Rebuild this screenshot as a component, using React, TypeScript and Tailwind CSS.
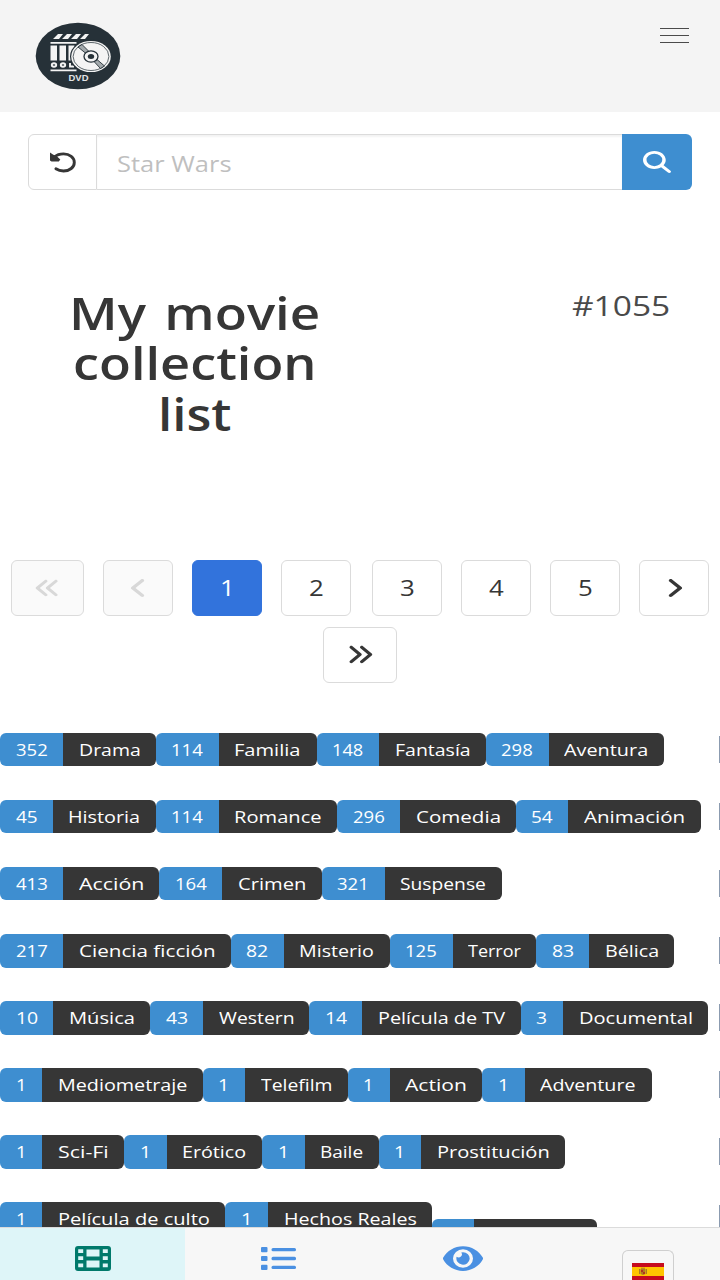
import React, { useLayoutEffect, useRef, useState } from "react";
import { FaEye } from "react-icons/fa";
import {
  FaAngleLeft,
  FaAngleRight,
  FaAnglesLeft,
  FaAnglesRight,
  FaMagnifyingGlass,
} from "react-icons/fa6";

// A line of text whose glyphs are widened to fill the given width.
function Fit({ w, children, className = "" }: { w: number; children: string; className?: string }) {
  const ref = useRef<HTMLSpanElement>(null);
  const [scale, setScale] = useState(1.24);
  useLayoutEffect(() => {
    if (ref.current) setScale(w / ref.current.offsetWidth);
  }, [w, children]);
  return (
    <span className={`flex ${className}`} style={{ width: w }}>
      <span ref={ref} className="block shrink-0 origin-left whitespace-nowrap" style={{ transform: `scaleX(${scale})` }}>
        {children}
      </span>
    </span>
  );
}

type Genre = [count: string, countWidth: number, name: string, nameWidth: number];

const rows: Genre[][] = [
  [["352", 63, "Drama", 92.5], ["114", 63, "Familia", 98], ["148", 62.5, "Fantasía", 106.5], ["298", 63, "Aventura", 115]],
  [["45", 52.5, "Historia", 103], ["114", 63, "Romance", 118.5], ["296", 63, "Comedia", 115.5], ["54", 52.5, "Animación", 132.5]],
  [["413", 63, "Acción", 96], ["164", 63, "Crimen", 99.5], ["321", 63, "Suspense", 117]],
  [["217", 63, "Ciencia ficción", 167.5], ["82", 53, "Misterio", 106], ["125", 63, "Terror", 83.5], ["83", 53, "Bélica", 85]],
  [["10", 53, "Música", 97], ["43", 53, "Western", 106], ["14", 53, "Película de TV", 158.5], ["3", 42.5, "Documental", 144.5]],
  [["1", 42, "Mediometraje", 160.5], ["1", 42.5, "Telefilm", 102.5], ["1", 42, "Action", 92.5], ["1", 42.5, "Adventure", 127]],
  [["1", 42, "Sci-Fi", 82], ["1", 42.5, "Erótico", 95.5], ["1", 42.5, "Baile", 74], ["1", 42.5, "Prostitución", 143.5]],
  [["1", 42, "Película de culto", 183], ["1", 43, "Hechos Reales", 163.5], ["1", 42, "Navidad", 123.5]],
];

function Tag({ genre, lowered }: { genre: Genre; lowered: boolean }) {
  const [count, cw, name, nw] = genre;
  return (
    <div className={`flex h-[33.6px] shrink-0 overflow-hidden rounded-[6px] text-[16.8px] leading-[33px] text-white ${lowered ? "mt-[17px]" : ""}`}>
      <div className="flex justify-center bg-[#3e8ed0]" style={{ width: cw }}>
        <Fit w={cw - 31}>{count}</Fit>
      </div>
      <div className="flex justify-center bg-[#363636]" style={{ width: nw }}>
        <Fit w={nw - 31}>{name}</Fit>
      </div>
    </div>
  );
}

const pageBox = "flex h-14 shrink-0 items-center justify-center rounded-[6px] border-[1.5px] text-[22.4px]";

function Logo() {
  return (
    <svg width="86" height="68" viewBox="0 0 86 68" className="block">
      <ellipse cx="43" cy="34" rx="42.3" ry="33.2" fill="#263138" />
      <g fill="#f4f4f4">
        <path d="M18 17l5-5h5l-4 5zM27 17l5-5h5l-4 5zM36 17l5-5h5l-4 5zM45 17l5-5h4l-4 5z" />
        <path d="M15.500 20h26v1.800h-26zM15.500 23.500h6.500v15h-6.500zM24.500 23.500h6.500v15h-6.500zM33.500 23.500h6v15h-6zM15.500 47.500h26v1.800h-26z" />
      </g>
      <g fill="none" stroke="#f4f4f4" strokeWidth="1.900">
        <ellipse cx="19" cy="43" rx="2.200" ry="1.700" />
        <ellipse cx="28" cy="43" rx="2.200" ry="1.700" />
        <path d="M35 41v3.500h4" />
      </g>
      <ellipse cx="56" cy="34.500" rx="21" ry="16.700" fill="#263138" />
      <ellipse cx="56" cy="34.500" rx="19.800" ry="15.600" fill="#f4f4f4" />
      <ellipse cx="56" cy="34.500" rx="17.900" ry="14" fill="none" stroke="#4c565b" strokeWidth="0.900" />
      <path d="M43 25l4-2.500 7 7-3 2zM59 39.500l3-2 7.500 6.500-4 2.500z" fill="#a3a9ac" stroke="#263138" strokeWidth="0.900" />
      <ellipse cx="56" cy="34.500" rx="7" ry="5.600" fill="#f4f4f4" stroke="#263138" strokeWidth="1.300" />
      <ellipse cx="56" cy="34.500" rx="3.200" ry="2.500" fill="#263138" />
      <text x="33.500" y="59" fontSize="9" fontWeight="700" fontFamily="Liberation Sans, sans-serif" fill="#e2e4e5" textLength="20" lengthAdjust="spacingAndGlyphs">
        DVD
      </text>
    </svg>
  );
}

export default function App() {
  return (
    <div className="flex h-[1280px] w-[720px] flex-col overflow-hidden bg-white font-['Open_Sans','Noto_Sans',sans-serif] text-[#363636]">
      <header className="flex h-28 shrink-0 items-start justify-between bg-[#f4f4f4] pl-[35px] pr-[31.500px]">
        <div className="pt-[21.500px]">
          <Logo />
        </div>
        <button aria-label="Menu" className="flex w-[28.500px] flex-col gap-[5.600px] pt-[28px]">
          <span className="h-[1.400px] w-full bg-[#4a4a4a]" />
          <span className="h-[1.400px] w-full bg-[#4a4a4a]" />
          <span className="h-[1.400px] w-full bg-[#4a4a4a]" />
        </button>
      </header>

      <main className="flex min-h-0 flex-1 flex-col overflow-hidden">
        <div className="mt-[22px] flex h-14 w-[664px] shrink-0 self-center">
          <button aria-label="Reset" className="flex w-[69px] items-center justify-center rounded-l-[6px] border-[1.500px] border-[#dbdbdb]">
            <svg width="26" height="21" viewBox="0 0 26 21">
              <path d="M0 .5l3.300 2.200 3 1 4 3.800-1.500 2H1.500L0 8.500z" fill="currentColor" />
              <path d="M4.500 5C7 2.700 10 1.900 13.500 1.900c6.200 0 10.800 3.700 10.800 8.500s-4.600 8.600-10.800 8.600c-3 0-5.500-.8-7.600-2.200" fill="none" stroke="currentColor" strokeWidth="2.900" strokeLinecap="round" />
            </svg>
          </button>
          <div className="flex flex-1 items-center border-y-[1.500px] border-[#dbdbdb] pl-[20px] pt-[3px] text-[22.400px] text-[#bfbfbf] shadow-[inset_0_2px_2px_rgba(10,10,10,0.05)]">
            <Fit w={115}>Star Wars</Fit>
          </div>
          <button aria-label="Search" className="flex w-[70px] items-center justify-center rounded-r-[6px] bg-[#3e8ed0] text-white">
            <FaMagnifyingGlass className="h-[22px] w-[28px]" preserveAspectRatio="none" />
          </button>
        </div>

        <div className="mt-[98px] flex h-[271.500px] shrink-0 items-start justify-between pl-[69px] pr-[50px]">
          <h1 className="flex w-[251px] flex-col items-center text-[44.800px] font-semibold leading-[50.400px] [word-spacing:4px]">
            <Fit w={251}>My movie</Fit>
            <Fit w={244}>collection</Fit>
            <Fit w={74}>list</Fit>
          </h1>
          <Fit w={98} className="mt-[-1px] text-[28px] leading-[36px] text-[#4a4a4a]">#1055</Fit>
        </div>

        <nav className="flex shrink-0 flex-col items-center gap-[11px]">
          <div className="flex gap-[19px]">
            <div className={`${pageBox} w-[73px] border-[#dbdbdb] bg-[#fafafa] text-[#d8d8d8]`}>
              <FaAnglesLeft className="h-[22px] w-[27px]" preserveAspectRatio="none" />
            </div>
            <div className={`${pageBox} w-[70px] border-[#dbdbdb] bg-[#fafafa] text-[#d8d8d8]`}>
              <FaAngleLeft className="h-[24px] w-[19px]" preserveAspectRatio="none" />
            </div>
            <div className={`${pageBox} w-[70px] border-[#3273dc] bg-[#3273dc] text-white`}>
              <Fit w={15}>1</Fit>
            </div>
            {["2", "3", "4", "5"].map((n) => (
              <div key={n} className={`${pageBox} w-[70px] border-[#dbdbdb] ${n === "2" ? "mr-[2px]" : ""}`}>
                <Fit w={15}>{n}</Fit>
              </div>
            ))}
            <div className={`${pageBox} w-[70px] border-[#dbdbdb]`}>
              <FaAngleRight className="h-[24px] w-[19px]" preserveAspectRatio="none" />
            </div>
          </div>
          <div className={`${pageBox} w-[74px] border-[#dbdbdb]`}>
            <FaAnglesRight className="h-[23px] w-[28px]" preserveAspectRatio="none" />
          </div>
        </nav>

        <section className="mt-[50px] flex shrink-0 flex-col gap-[33.550px]">
          {rows.map((row, i) => (
            <div key={i} className="flex h-[33.600px] items-start">
              {row.map((genre, j) => (
                <Tag key={j} genre={genre} lowered={i === 7 && j === 2} />
              ))}
              <span className="ml-auto mt-[3px] h-[27px] w-px bg-[#8b9bb0]" />
            </div>
          ))}
        </section>
      </main>

      <footer className="flex h-[53px] shrink-0 border-t border-[#dbdbdb] bg-[#f7f7f7] text-[#4a90e2]">
        <div className="flex w-[185px] justify-center bg-[#def5f8] pt-[18px] text-[#00796b]">
          <svg width="36" height="25" viewBox="0 0 36 25">
            <rect width="36" height="25" rx="3" fill="currentColor" />
            <path
              fill="#def5f8"
              d="M11.500 3.500h13v7h-13zM11.500 14.500h13v7h-13zM3.200 3.300h5v3.800h-5zM3.200 10.300h5v3.800h-5zM3.200 17.500h5v3.800h-5zM27.800 3.300h5v3.800h-5zM27.800 10.300h5v3.800h-5zM27.800 17.500h5v3.800h-5z"
            />
          </svg>
        </div>
        <div className="flex w-[186px] justify-center pt-[19px]">
          <svg width="35" height="23" viewBox="0 0 35 23" fill="currentColor">
            <rect width="6.500" height="5.200" rx="1" />
            <rect y="8.900" width="6.500" height="5.200" rx="1" />
            <rect y="17.800" width="6.500" height="5.200" rx="1" />
            <rect x="10.500" y="0.900" width="24.500" height="3.400" rx="1.500" />
            <rect x="10.500" y="9.800" width="24.500" height="3.400" rx="1.500" />
            <rect x="10.500" y="18.700" width="24.500" height="3.400" rx="1.500" />
          </svg>
        </div>
        <div className="flex w-[183px] justify-center pt-[14px]">
          <FaEye className="h-[33px] w-[40px]" preserveAspectRatio="none" />
        </div>
        <div className="flex flex-1 items-start pl-[68px] pt-[22px]">
          <div className="flex h-[36px] w-[52px] justify-center rounded-t-[6px] border-[1.500px] border-b-0 border-[#cfcfcf] pt-[12px]">
            <svg width="32" height="17" viewBox="0 0 32 17">
              <path fill="#c60b1e" d="M0 0h32v17H0z" />
              <path fill="#ffc400" d="M0 4h32v9H0z" />
              <path fill="#ad7b22" d="M7 6h1v5H7zM14 6h1v5h-1zM8.500 6h5v5l-2.500 1-2.500-1zM9 4.800h4v1H9z" />
              <path fill="#b13120" d="M9 7h2v2H9zM11 9h2v2h-2z" />
            </svg>
          </div>
        </div>
      </footer>
    </div>
  );
}
